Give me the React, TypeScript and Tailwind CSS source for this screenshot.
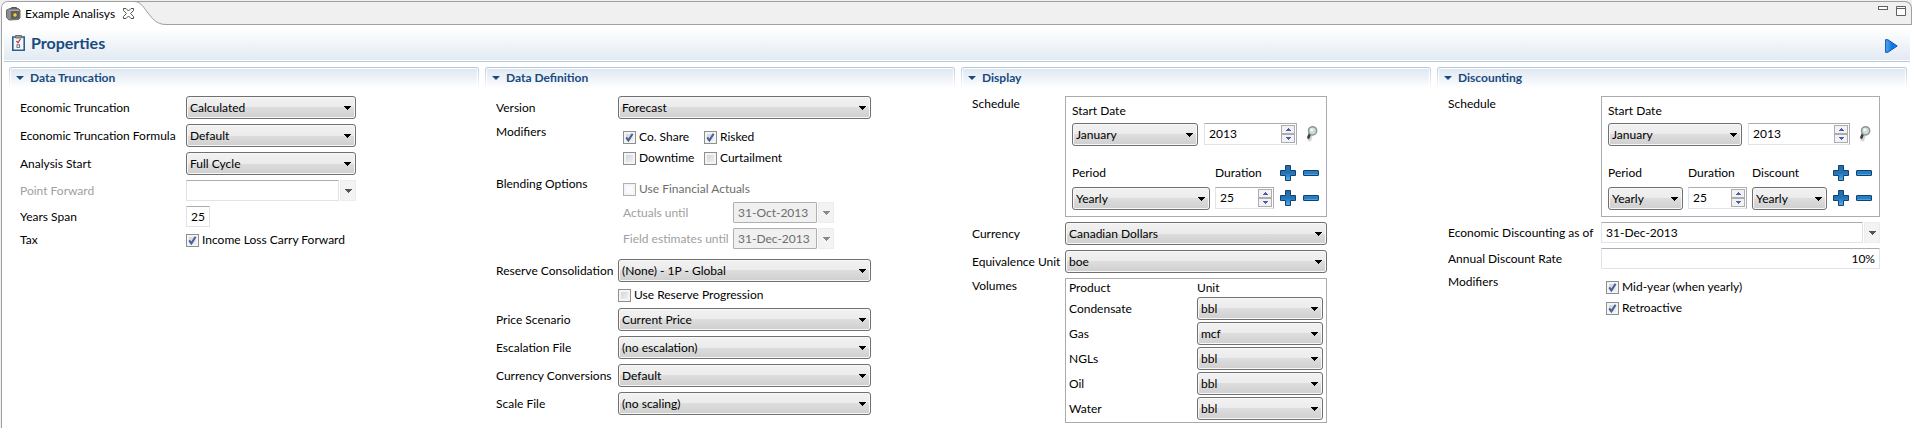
import React, { useId, useState } from 'react';

type SelectBoxProps = { id?: string; label?: string; options: string[]; className?: string };

function SelectBox({ id, label, options, className = 'w-full' }: SelectBoxProps) {
  return (
    <span className={`relative block h-[23px] ${className}`}>
      <select
        id={id}
        aria-label={label}
        className="block h-full w-full appearance-none rounded-[3px] border border-[#707070] bg-[linear-gradient(#f2f2f2,#ebebeb_50%,#dddddd_50%,#cfcfcf)] pr-4 pl-[3px] leading-[19px] shadow-[inset_0_0_0_1px_#f8f8f8] outline-none"
      >
        {options.map((o) => (
          <option key={o}>{o}</option>
        ))}
      </select>
      <svg width="7" height="4" viewBox="0 0 7 4" className="pointer-events-none absolute top-[10px] right-[5px]" shapeRendering="crispEdges">
        <path d="M0 0H7L3.5 4Z" fill="#000" />
      </svg>
    </span>
  );
}

type CheckProps = { label: string; checked?: boolean; disabled?: boolean };

function Check({ label, checked = false, disabled = false }: CheckProps) {
  const [on, setOn] = useState(checked);
  return (
    <label className={`flex h-4 items-center gap-[3px] whitespace-nowrap ${disabled ? 'text-[#6d6d6d]' : ''}`}>
      <span className="relative block size-[13px] shrink-0">
        <input
          type="checkbox"
          checked={on}
          disabled={disabled}
          onChange={(e) => setOn(e.target.checked)}
          className="block size-[13px] appearance-none border border-[#8e8f8f] bg-[linear-gradient(135deg,#cbcfd5,#f6f6f6)] shadow-[inset_0_0_0_2px_#f4f4f4] disabled:border-[#b1b1b1] disabled:bg-[#fbfbfb] disabled:bg-none"
        />
        {on && (
          <svg width="13" height="13" viewBox="0 0 13 13" className="pointer-events-none absolute inset-0">
            <path d="M3.2 6.4L5.4 9.4L9.6 2.8" fill="none" stroke="#4a5f97" strokeWidth="2" />
          </svg>
        )}
      </span>
      {label}
    </label>
  );
}

const field =
  'block h-[21px] w-full min-w-0 rounded-[1px] border border-[#e2e3ea] border-t-[#abadb3] bg-white px-1 outline-none disabled:border-[#afafaf] disabled:bg-[#f0f0f0] disabled:text-[#6d6d6d]';

type DateBoxProps = { id: string; value?: string; disabled?: boolean; className?: string };

function DateBox({ id, value = '', disabled = false, className = '' }: DateBoxProps) {
  return (
    <div className={`flex gap-px ${className}`}>
      <input id={id} type="text" defaultValue={value} disabled={disabled} className={field} />
      <button type="button" aria-label="Open calendar" disabled={disabled} className="flex h-[21px] w-4 shrink-0 items-center justify-center border border-[#ececec] bg-[#f3f3f3]">
        <svg width="7" height="4" viewBox="0 0 7 4" shapeRendering="crispEdges">
          <path d="M0 0H7L3.5 4Z" fill={disabled ? '#8a8a8a' : '#555555'} />
        </svg>
      </button>
    </div>
  );
}

function SpinButton({ up, label }: { up: boolean; label: string }) {
  return (
    <button type="button" aria-label={label} className="flex h-[9px] w-[14px] items-center justify-center border border-[#abadb3] bg-[#f2f2f2]">
      <svg width="5" height="3" viewBox="0 0 5 3" shapeRendering="crispEdges">
        <path d={up ? 'M2.5 0L5 3H0Z' : 'M0 0H5L2.5 3Z'} fill="#4a5fa5" />
      </svg>
    </button>
  );
}

function Spinner({ label, start, className = '' }: { label: string; start: number; className?: string }) {
  const [value, setValue] = useState(start);
  return (
    <div className={`flex h-[22px] border border-[#e2e3ea] border-t-[#abadb3] border-r-[#abadb3] bg-white ${className}`}>
      <input
        type="text"
        aria-label={label}
        value={value}
        onChange={(e) => setValue(Number(e.target.value) || 0)}
        className="block h-[18px] w-full min-w-0 bg-transparent pl-1 outline-none"
      />
      <div className="flex w-4 shrink-0 flex-col items-center justify-center">
        <SpinButton up label={`Increase ${label}`} />
        <SpinButton up={false} label={`Decrease ${label}`} />
      </div>
    </div>
  );
}

function PlusMinus() {
  const gid = useId();
  return (
    <div className="flex justify-end gap-[7px]">
      <button type="button" aria-label="Add" className="block size-4">
        <svg width="16" height="16" viewBox="0 0 16 16">
          <defs>
            <linearGradient id={gid} x1="0" y1="0" x2="0" y2="1">
              <stop offset="0" stopColor="#2a6ca3" />
              <stop offset=".5" stopColor="#2273b8" />
              <stop offset="1" stopColor="#55b0ee" />
            </linearGradient>
          </defs>
          <path d="M5.5 .5H10.5V5.5H15.5V10.5H10.5V15.5H5.5V10.5H.5V5.5H5.5Z" fill={`url(#${gid})`} stroke="#11436e" strokeLinejoin="round" />
        </svg>
      </button>
      <button type="button" aria-label="Remove" className="block size-4">
        <svg width="16" height="16" viewBox="0 0 16 16">
          <rect x=".5" y="5.5" width="15" height="5" rx=".5" fill="#2a7fc4" stroke="#11436e" />
          <path d="M1.5 9.5H14.5" stroke="#4ba3e2" />
        </svg>
      </button>
    </div>
  );
}

function Magnifier() {
  return (
    <button type="button" aria-label="Look up date" className="block h-4 w-4">
      <svg width="16" height="16" viewBox="0 0 16 16">
        <path d="M6.5 9.5L5.5 13.4" stroke="#b8b8b8" strokeWidth="4" strokeLinecap="round" opacity=".6" />
        <path d="M6 7.6L4.4 11.6" stroke="#3c3c3c" strokeWidth="2.6" strokeLinecap="round" />
        <circle cx="8.6" cy="4.8" r="4.1" fill="#c9dcda" stroke="#909696" strokeWidth="1.5" />
        <circle cx="7.8" cy="3.8" r="1.6" fill="#f4fafa" />
      </svg>
    </button>
  );
}

function Section({ title, children }: { title: string; children: React.ReactNode }) {
  return (
    <section className="min-w-0">
      <div className="rounded-t-[3px] bg-[linear-gradient(#b4c9de,#ffffff)] px-px pt-px">
        <div className="rounded-t-[2px] bg-white px-px pt-px">
          <h2 className="flex h-[19px] items-center gap-[6px] bg-[linear-gradient(#dfe8f2,#ffffff)] pb-[2px] pl-[5px] font-bold text-[#184a80]">
            <svg width="8" height="4" viewBox="0 0 8 4">
              <path d="M0 0H8L4 4Z" fill="#184a80" />
            </svg>
            {title}
          </h2>
        </div>
      </div>
      <div className="pt-2 pl-[11px]">{children}</div>
    </section>
  );
}

function FieldLabel({ htmlFor, children, tall = 'h-[23px]', muted = false }: { htmlFor: string; children: string; tall?: string; muted?: boolean }) {
  return (
    <label htmlFor={htmlFor} className={`flex items-center whitespace-nowrap ${tall} ${muted ? 'text-[#a0a0a0]' : ''}`}>
      {children}
    </label>
  );
}

function GroupLabel({ children }: { children: string }) {
  return <div className="h-4 whitespace-nowrap">{children}</div>;
}

function ScheduleTop({ month, year }: { month: string; year: string }) {
  return (
    <>
      <div className="mb-1 h-4">Start Date</div>
      <div className="mb-[19px] flex">
        <SelectBox label="Start month" options={['January']} className={month} />
        <Spinner label="Start year" start={2013} className={`ml-[6px] ${year}`} />
        <div className="mt-[3px] ml-[7px]">
          <Magnifier />
        </div>
      </div>
    </>
  );
}

const products: [string, string][] = [
  ['Condensate', 'bbl'],
  ['Gas', 'mcf'],
  ['NGLs', 'bbl'],
  ['Oil', 'bbl'],
  ['Water', 'bbl'],
];

function TabBar() {
  return (
    <div className="flex h-[24px] justify-between rounded-t-[7px] border border-b-0 border-[#a0a0a0] bg-[#f0f0f0] shadow-[inset_0_-1px_0_#a0a0a0]">
      <div className="flex">
        <div className="z-10 flex items-center rounded-tl-[6px] bg-white pl-1">
          <svg width="16" height="16" viewBox="0 0 16 16" className="shrink-0">
            <path d="M.5 4L4 2.5H12.5L14 4V12L12.5 13.5L3 14L.5 11.5Z" fill="#8a8a8a" stroke="#6a6a6a" />
            <path d="M4 4H13.5V12.5L4 13.2Z" fill="#5e5e5e" />
            <path d="M5.5 3V1.5H10.5V3" fill="none" stroke="#555555" />
            <path d="M4 4V13M4 4.5H13" stroke="#a8a8a8" />
            <circle cx="9" cy="9" r="1.7" fill="#f5d423" />
          </svg>
          <span className="ml-[3px] whitespace-nowrap">Example Analisys</span>
          <button type="button" aria-label="Close tab" className="ml-2 block h-[11px] w-[11px]">
            <svg width="11" height="11" viewBox="0 0 11 11">
              <path d="M.5 .5H3L5.5 3L8 .5H10.5V2.5L7.6 5.5L10.5 8.5V10.5H8L5.5 8L3 10.5H.5V8.5L3.4 5.5L.5 2.5Z" fill="#fff" stroke="#505050" />
            </svg>
          </button>
        </div>
        <svg width="32" height="23" viewBox="0 0 32 23" className="shrink-0">
          <path d="M0 0C7 0 10 6 14 11S22 22.5 32 22.5V23H0Z" fill="#fff" />
          <path d="M0 -.5C7 -.5 10 6 14 11S22 22.5 32 22.5" fill="none" stroke="#a0a0a0" />
        </svg>
      </div>
      <div className="flex gap-2 pt-1 pr-[5px]">
        <button type="button" aria-label="Minimize" className="block size-[10px]">
          <svg width="10" height="10" viewBox="0 0 10 10">
            <rect x=".5" y=".5" width="9" height="3" fill="#fff" stroke="#606060" />
          </svg>
        </button>
        <button type="button" aria-label="Maximize" className="block size-[10px]">
          <svg width="10" height="10" viewBox="0 0 10 10">
            <path d="M.5 .5H9.5V9.5H.5ZM.5 2.5H9.5" fill="#fff" stroke="#606060" />
          </svg>
        </button>
      </div>
    </div>
  );
}

export default function App() {
  return (
    <div className="min-h-screen bg-[#f0f0f0] pt-px pl-px font-['Lato','Open_Sans',sans-serif] text-[12px] leading-4 text-black">
      <TabBar />
      <main className="min-h-[calc(100vh-25px)] border-l border-[#a0a0a0] bg-white pb-[6px] pl-[2px]">
        <header className="mr-[2px] flex h-[37px] items-center justify-between border-b border-[#b4c9de] bg-[linear-gradient(#ffffff_4px,#e1e9f2)] pr-3 pl-2 shadow-[inset_0_-1px_0_#ffffff]">
          <h1 className="flex items-center gap-[6px] text-[16px] leading-5 font-bold text-[#184a80]">
            <svg width="13" height="16" viewBox="0 0 13 16">
              <path d="M.8 2H12.2V15.2H.8Z" fill="#f4f8fb" stroke="#2a5f90" strokeWidth="1.6" />
              <path d="M3.5 .5H9.5V3H3.5Z" fill="#9a9a9a" stroke="#6c6c6c" />
              <path d="M4.5 6L6 7.8L8.5 4" fill="none" stroke="#c03030" strokeWidth="1.2" />
              <rect x="5" y="9.8" width="2.6" height="2.6" fill="#fff" stroke="#6f6f6f" />
            </svg>
            Properties
          </h1>
          <button type="button" aria-label="Run" className="mt-[6px] block h-[14px] w-[13px]">
            <svg width="13" height="14" viewBox="0 0 13 14">
              <defs>
                <linearGradient id="run" x1="0" y1="0" x2="1" y2="0">
                  <stop offset="0" stopColor="#58a6f0" />
                  <stop offset=".6" stopColor="#0a74e0" />
                  <stop offset="1" stopColor="#1f8ff0" />
                </linearGradient>
              </defs>
              <path d="M.6 .6L3 .8L12.2 7L3 13.2L.6 13.4Z" fill="url(#run)" stroke="#1550b0" strokeLinejoin="round" />
            </svg>
          </button>
        </header>

        <div className="mt-[5px] grid grid-cols-4 gap-x-[6px] pr-[5px] pl-[5px]">
          <Section title="Data Truncation">
            <div className="grid grid-cols-[161px_170px] gap-[5px]">
              <FieldLabel htmlFor="trunc">Economic Truncation</FieldLabel>
              <SelectBox id="trunc" options={['Calculated']} />
              <FieldLabel htmlFor="formula">Economic Truncation Formula</FieldLabel>
              <SelectBox id="formula" options={['Default']} />
              <FieldLabel htmlFor="start">Analysis Start</FieldLabel>
              <SelectBox id="start" options={['Full Cycle']} />
              <FieldLabel htmlFor="forward" tall="h-[21px]" muted>Point Forward</FieldLabel>
              <DateBox id="forward" />
              <FieldLabel htmlFor="span" tall="h-[21px]">Years Span</FieldLabel>
              <div className="w-6">
                <input id="span" type="text" defaultValue="25" className={field} />
              </div>
              <GroupLabel>Tax</GroupLabel>
              <Check label="Income Loss Carry Forward" checked />
            </div>
          </Section>

          <Section title="Data Definition">
            <div className="grid grid-cols-[117px_253px] gap-[5px]">
              <FieldLabel htmlFor="version">Version</FieldLabel>
              <SelectBox id="version" options={['Forecast']} />
              <GroupLabel>Modifiers</GroupLabel>
              <div className="grid grid-cols-[76px_1fr] gap-[5px] p-[5px]">
                <Check label="Co. Share" checked />
                <Check label="Risked" checked />
                <Check label="Downtime" />
                <Check label="Curtailment" />
              </div>
              <GroupLabel>Blending Options</GroupLabel>
              <div className="grid grid-cols-[105px_101px] gap-[5px] p-[5px]">
                <div className="col-span-2">
                  <Check label="Use Financial Actuals" disabled />
                </div>
                <FieldLabel htmlFor="actuals" tall="h-[21px]" muted>Actuals until</FieldLabel>
                <DateBox id="actuals" value="31-Oct-2013" disabled />
                <FieldLabel htmlFor="estimates" tall="h-[21px]" muted>Field estimates until</FieldLabel>
                <DateBox id="estimates" value="31-Dec-2013" disabled />
              </div>
              <FieldLabel htmlFor="reserve">Reserve Consolidation</FieldLabel>
              <SelectBox id="reserve" options={['(None) - 1P - Global']} />
              <div className="col-start-2">
                <Check label="Use Reserve Progression" />
              </div>
              <FieldLabel htmlFor="price">Price Scenario</FieldLabel>
              <SelectBox id="price" options={['Current Price']} />
              <FieldLabel htmlFor="escalation">Escalation File</FieldLabel>
              <SelectBox id="escalation" options={['(no escalation)']} />
              <FieldLabel htmlFor="conversions">Currency Conversions</FieldLabel>
              <SelectBox id="conversions" options={['Default']} />
              <FieldLabel htmlFor="scale">Scale File</FieldLabel>
              <SelectBox id="scale" options={['(no scaling)']} />
            </div>
          </Section>

          <Section title="Display">
            <div className="grid grid-cols-[88px_262px] gap-[5px]">
              <GroupLabel>Schedule</GroupLabel>
              <div className="border border-[#a9abb0] p-[6px]">
                <ScheduleTop month="w-[126px]" year="w-[93px]" />
                <div className="grid grid-cols-[138px_59px_40px] gap-x-[5px] gap-y-[6px]">
                  <div>Period</div>
                  <div>Duration</div>
                  <PlusMinus />
                  <SelectBox label="Period" options={['Yearly']} />
                  <Spinner label="Duration" start={25} />
                  <div className="pt-[3px]">
                    <PlusMinus />
                  </div>
                </div>
              </div>
              <FieldLabel htmlFor="currency">Currency</FieldLabel>
              <SelectBox id="currency" options={['Canadian Dollars']} />
              <FieldLabel htmlFor="equivalence">Equivalence Unit</FieldLabel>
              <SelectBox id="equivalence" options={['boe']} />
              <GroupLabel>Volumes</GroupLabel>
              <div className="border border-[#a9abb0] pt-px">
                <table className="w-full border-collapse">
                  <thead>
                    <tr className="h-[17px] text-left align-top">
                      <th className="p-0 pl-[3px] font-normal">Product</th>
                      <th className="w-[129px] p-0 font-normal">Unit</th>
                    </tr>
                  </thead>
                  <tbody>
                    {products.map(([name, unit]) => (
                      <tr key={name}>
                        <td className="p-0 pb-[2px] pl-[3px]">{name}</td>
                        <td className="w-[129px] p-0 pr-[3px] pb-[2px]">
                          <SelectBox label={`${name} unit`} options={[unit]} />
                        </td>
                      </tr>
                    ))}
                  </tbody>
                </table>
              </div>
            </div>
          </Section>

          <Section title="Discounting">
            <div className="grid grid-cols-[148px_279px] gap-[5px]">
              <GroupLabel>Schedule</GroupLabel>
              <div className="border border-[#a9abb0] p-[6px]">
                <ScheduleTop month="w-[134px]" year="w-[102px]" />
                <div className="grid grid-cols-[75px_59px_75px_40px] gap-x-[5px] gap-y-[6px]">
                  <div>Period</div>
                  <div>Duration</div>
                  <div>Discount</div>
                  <PlusMinus />
                  <SelectBox label="Period" options={['Yearly']} />
                  <Spinner label="Duration" start={25} />
                  <SelectBox label="Discount" options={['Yearly']} />
                  <div className="pt-[3px]">
                    <PlusMinus />
                  </div>
                </div>
              </div>
              <FieldLabel htmlFor="asof" tall="h-[21px]">Economic Discounting as of</FieldLabel>
              <DateBox id="asof" value="31-Dec-2013" />
              <FieldLabel htmlFor="rate" tall="h-[21px]">Annual Discount Rate</FieldLabel>
              <input id="rate" type="text" defaultValue="10%" className={`${field} text-right`} />
              <GroupLabel>Modifiers</GroupLabel>
              <div className="flex flex-col gap-[5px] p-[5px]">
                <Check label="Mid-year (when yearly)" checked />
                <Check label="Retroactive" checked />
              </div>
            </div>
          </Section>
        </div>
      </main>
    </div>
  );
}
